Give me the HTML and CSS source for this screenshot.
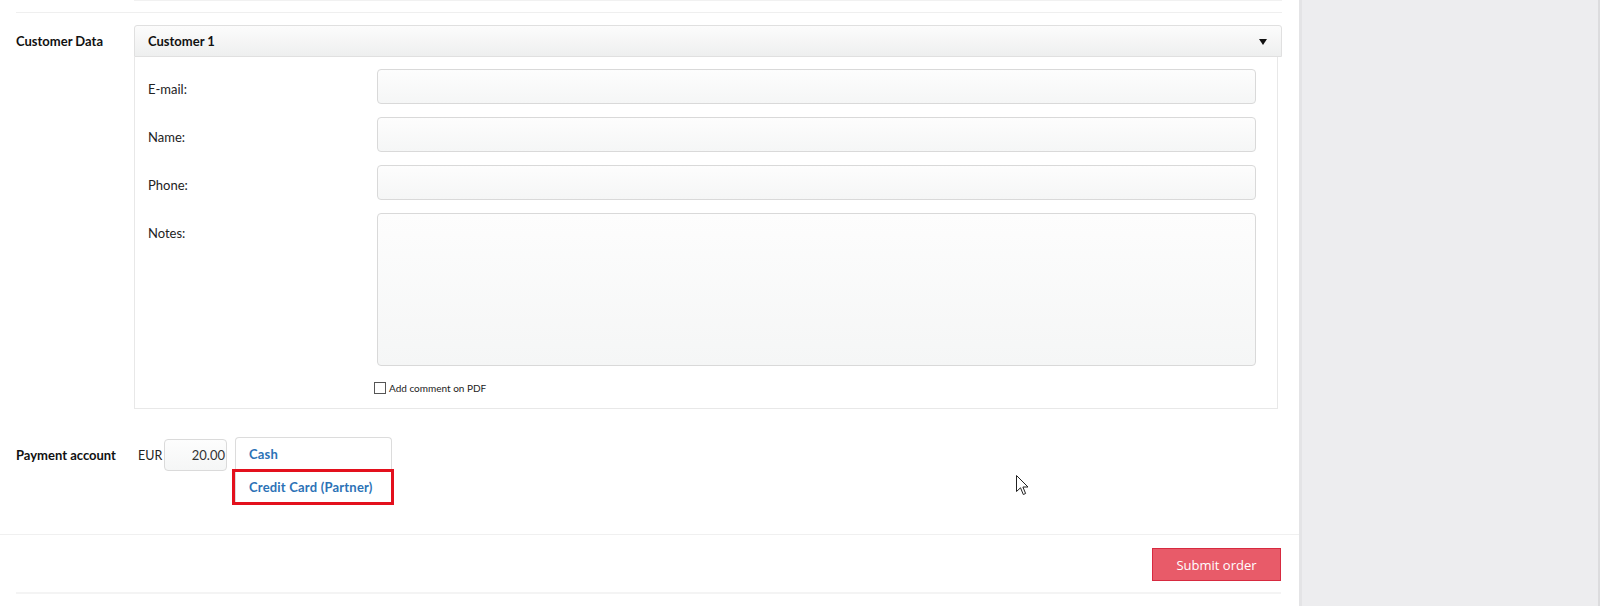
FILE: index.html
```html
<!DOCTYPE html>
<html lang="en">
<head>
<meta charset="utf-8">
<title>Order form</title>
<link rel="stylesheet" href="styles.css">
</head>
<body>
<div class="layout">
  <main class="main">
    <div class="top-line"></div>
    <div class="top-sep"></div>

    <section class="form-row customer-row">
      <div class="row-label">Customer Data</div>
      <div class="customer-box">
        <div class="dropdown-head">
          <span>Customer 1</span>
          <span class="caret"></span>
        </div>
        <div class="dropdown-body">
          <div class="field">
            <label class="field-label">E-mail:</label>
            <div class="input"></div>
          </div>
          <div class="field">
            <label class="field-label">Name:</label>
            <div class="input"></div>
          </div>
          <div class="field">
            <label class="field-label">Phone:</label>
            <div class="input"></div>
          </div>
          <div class="field">
            <label class="field-label">Notes:</label>
            <div class="input textarea"></div>
          </div>
          <div class="check-row">
            <span class="checkbox"></span>
            <span class="check-text">Add comment on PDF</span>
          </div>
        </div>
      </div>
    </section>

    <section class="form-row pay-row">
      <div class="row-label pay-label">Payment account</div>
      <div class="pay-controls">
        <span class="currency">EUR</span>
        <div class="amount">20.00</div>
        <ul class="pay-list">
          <li class="pay-item">Cash</li>
          <li class="pay-item selected">Credit Card (Partner)</li>
        </ul>
      </div>
    </section>

    <div class="mid-sep"></div>

    <div class="footer">
      <button class="submit">Submit order</button>
    </div>
    <div class="bottom-line"></div>

    <svg class="cursor" width="13" height="21" viewBox="0 0 13 21">
      <path d="M0.5 0.5 L0.5 16.5 L4.5 12.8 L7.3 19.5 L9.6 18.5 L6.9 12 L12 12 Z" fill="#fff" stroke="#222" stroke-width="1" stroke-linejoin="miter"/>
    </svg>
  </main>
  <aside class="sidebar"></aside>
</div>
</body>
</html>
```

FILE: styles.css
```css
* { box-sizing: border-box; }

html, body {
  margin: 0;
  padding: 0;
  height: 606px;
  overflow: hidden;
}

body {
  font-family: Lato, "Open Sans", "Liberation Sans", sans-serif;
  font-size: 12px;
  color: #222;
  background: #fff;
}

.layout {
  display: flex;
  height: 606px;
}

.main {
  position: relative;
  width: 1299px;
  flex: none;
  background: #fff;
}

.sidebar {
  flex: 1;
  background: #ededef;
  border-left: 3px solid #e4e4e6;
  border-right: 2px solid #dcdcde;
}

.top-line {
  margin-left: 134px;
  width: 1148px;
  height: 1px;
  background: #f1f1f1;
}

.top-sep {
  margin-top: 11px;
  margin-left: 16px;
  width: 1266px;
  height: 1px;
  background: #efefef;
}

.form-row {
  display: flex;
  padding-left: 16px;
}

.row-label {
  width: 118px;
  flex: none;
  font-weight: 700;
  color: #111;
  font-size: 13px;
  line-height: 32px;
}

.customer-row {
  margin-top: 12px;
}

.customer-box {
  width: 1148px;
}

.dropdown-head {
  height: 32px;
  display: flex;
  align-items: center;
  justify-content: space-between;
  padding: 0 14px 0 13px;
  border: 1px solid #e0e0e0;
  border-radius: 3px 3px 0 0;
  background: linear-gradient(#fcfcfc, #eeefef);
  font-weight: 700;
  color: #111;
  font-size: 13px;
}

.caret {
  width: 0;
  height: 0;
  margin-top: 2px;
  border-left: 4px solid transparent;
  border-right: 4px solid transparent;
  border-top: 6px solid #111;
}

.dropdown-body {
  width: 1144px;
  border: 1px solid #e8e8e8;
  border-top: none;
  padding: 12px 21px 14px 13px;
}

.field {
  display: flex;
  margin-bottom: 13px;
}

.field-label {
  width: 229px;
  flex: none;
  padding-top: 12px;
  line-height: 16px;
  font-size: 13px;
  color: #222;
}

.input {
  width: 879px;
  height: 35px;
  border: 1px solid #d9d9d9;
  border-radius: 4px;
  background: linear-gradient(#fdfdfd, #f5f6f6);
}

.input.textarea {
  height: 153px;
}

.field:last-of-type {
  margin-bottom: 0;
}

.check-row {
  display: flex;
  align-items: center;
  margin-top: 15px;
  margin-left: 226px;
  height: 13px;
}

.checkbox {
  width: 12px;
  height: 12px;
  border: 1px solid #555;
  background: #fff;
  margin-right: 3px;
}

.check-text {
  font-size: 10px;
  color: #222;
}

.pay-row {
  margin-top: 28px;
  height: 68px;
}

.pay-label {
  line-height: 36px;
}

.pay-controls {
  display: flex;
  align-items: flex-start;
}

.currency {
  margin-left: 4px;
  margin-top: 11px;
  width: 26px;
  font-size: 12.5px;
  color: #222;
}

.amount {
  margin-top: 2px;
  width: 63px;
  height: 32px;
  border: 1px solid #dadada;
  border-radius: 4px;
  background: linear-gradient(#fdfdfd, #f5f6f6);
  text-align: right;
  padding-right: 1px;
  line-height: 30px;
  font-size: 13px;
  color: #333;
}

.pay-list {
  list-style: none;
  margin: 0 0 0 8px;
  padding: 0;
  width: 157px;
  border: 1px solid #dcdcdc;
  border-bottom: none;
  border-radius: 4px 4px 0 0;
}

.pay-item {
  position: relative;
  height: 32px;
  line-height: 32px;
  padding-left: 13px;
  font-weight: 700;
  font-size: 13px;
  letter-spacing: 0.2px;
  color: #2c72b6;
}

.pay-item.selected {
  height: 34px;
  line-height: 34px;
}

.pay-item.selected::after {
  content: "";
  position: absolute;
  top: -1px;
  left: -4px;
  right: -3px;
  bottom: -1px;
  border: 3px solid #e3101d;
}

.mid-sep {
  margin-top: 29px;
  height: 1px;
  background: #f0f0f0;
}

.footer {
  display: flex;
  justify-content: flex-end;
  padding: 13px 18px 0 0;
}

.submit {
  width: 129px;
  height: 33px;
  margin: 0;
  border: 1px solid #d72a40;
  background: #e85b69;
  color: #fff;
  font-family: "Open Sans", "Liberation Sans", sans-serif;
  font-size: 13px;
  padding: 0;
}

.bottom-line {
  margin-top: 11px;
  margin-left: 16px;
  width: 1265px;
  height: 2px;
  background: #f4f4f4;
}

.cursor {
  position: absolute;
  left: 1016px;
  top: 475px;
}
```
